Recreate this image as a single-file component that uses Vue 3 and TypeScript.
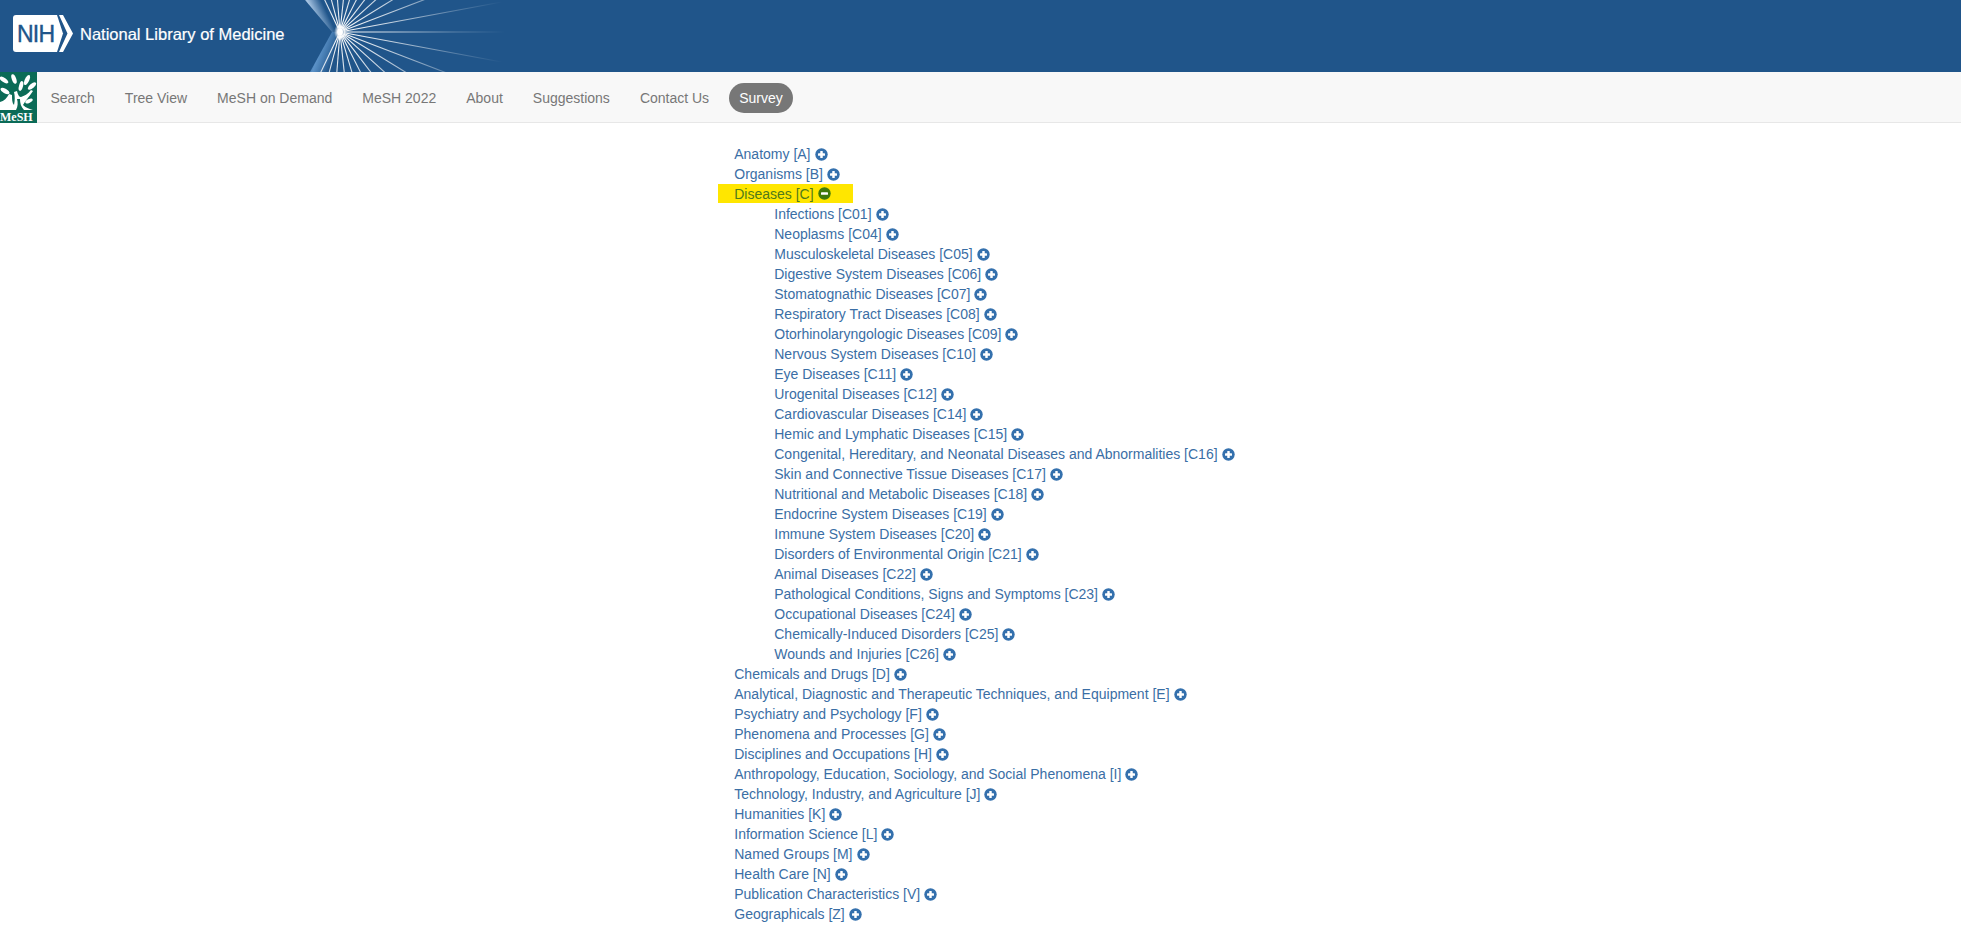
<template>
  <div class="page">
    <header class="banner">
      <svg class="burst" width="230" height="72" viewBox="300 0 230 72">
        <defs>
          <radialGradient id="rayGrad" gradientUnits="userSpaceOnUse" cx="340" cy="32" r="165">
            <stop offset="0" stop-color="#ffffff" />
            <stop offset="0.3" stop-color="#ffffff" stop-opacity="0.75" />
            <stop offset="0.7" stop-color="#ffffff" stop-opacity="0.25" />
            <stop offset="1" stop-color="#ffffff" stop-opacity="0" />
          </radialGradient>
          <radialGradient id="coreGrad">
            <stop offset="0.4" stop-color="#ffffff" />
            <stop offset="1" stop-color="#ffffff" stop-opacity="0" />
          </radialGradient>
          <linearGradient id="bandTop" gradientUnits="userSpaceOnUse" x1="305" y1="10" x2="322" y2="2">
            <stop offset="0" stop-color="#a9c6e4" stop-opacity="0.15" />
            <stop offset="0.3" stop-color="#a9c6e4" />
            <stop offset="1" stop-color="#20558a" />
          </linearGradient>
          <linearGradient id="bandBottom" gradientUnits="userSpaceOnUse" x1="308" y1="60" x2="330" y2="68">
            <stop offset="0" stop-color="#5b92c8" stop-opacity="0.2" />
            <stop offset="0.35" stop-color="#5b92c8" />
            <stop offset="1" stop-color="#20558a" />
          </linearGradient>
        </defs>
        <polygon points="305,0 322,0 337,32 332,32" fill="url(#bandTop)" />
        <polygon points="332,32 337,32 329,72 310,72" fill="url(#bandBottom)" />
        <line
          v-for="ray in rays"
          :key="ray.angle"
          :x1="ray.x1"
          :y1="ray.y1"
          :x2="ray.x2"
          :y2="ray.y2"
          stroke="url(#rayGrad)"
          :stroke-width="ray.width"
        />
        <ellipse cx="340" cy="32" rx="6" ry="8.5" fill="url(#coreGrad)" />
      </svg>
      <div class="nih">
        <svg width="60" height="37" viewBox="0 0 60 37">
          <path d="M3 0H44L50 18.500L44 37H3Q0 37 0 34V3Q0 0 3 0Z" fill="#fff" />
          <path d="M46 0H50L60 18.500L50 37H46L54.500 18.500Z" fill="#fff" />
        </svg>
        <span class="nih-mark">NIH</span>
      </div>
      <span class="nlm">National Library of Medicine</span>
    </header>

    <nav class="navbar">
      <svg class="mesh-logo" width="37" height="51" viewBox="0 0 37 51">
        <rect width="37" height="51" fill="#0b6b57" />
        <path d="M0 38V30C4 29 7 26 9 22L12 23C12 27 12 31 14 33C15 28 15 24 14 20L17 19C18 23 19 25 21 25C24 24 28 22 31 18L33 19C29 25 25 29 23 33C26 36 30 37 33 38Z" fill="#fff" />
        <path d="M16 38C18 34 18 31 17 27L20 27C20 31 21 35 24 38Z" fill="#0b6b57" />
        <g fill="#fff">
          <ellipse cx="4" cy="8" rx="5" ry="2.200" transform="rotate(35 4 8)" />
          <ellipse cx="14" cy="7" rx="2.200" ry="5" transform="rotate(-20 14 7)" />
          <ellipse cx="27" cy="8" rx="2.200" ry="5.500" transform="rotate(25 27 8)" />
          <ellipse cx="32" cy="14" rx="5" ry="2.200" transform="rotate(-40 32 14)" />
          <ellipse cx="5" cy="19" rx="5" ry="2.200" transform="rotate(30 5 19)" />
          <ellipse cx="21" cy="14" rx="2" ry="5" transform="rotate(15 21 14)" />
          <ellipse cx="29" cy="29" rx="4" ry="1.800" transform="rotate(-25 29 29)" />
        </g>
        <text x="0" y="49" class="mesh-word">MeSH</text>
      </svg>
      <ul class="nav-links">
        <li v-for="link in links" :key="link" class="nav-link">{{ link }}</li>
        <li class="nav-link survey">Survey</li>
      </ul>
    </nav>

    <main class="tree">
      <ul class="tree-list">
        <li v-for="cat in categories" :key="cat.label">
          <div class="row" :class="{ open: cat.children }">
            <a class="term">{{ cat.label }}</a>
            <svg class="toggle" width="13" height="13" viewBox="0 0 13 13">
              <circle cx="6.500" cy="6.500" r="6.200" fill="currentColor" />
              <rect x="3" y="5.250" width="7" height="2.500" rx="0.600" fill="#fff" />
              <rect v-if="!cat.children" x="5.250" y="3" width="2.500" height="7" rx="0.600" fill="#fff" />
            </svg>
          </div>
          <ul v-if="cat.children" class="tree-sub">
            <li v-for="child in cat.children" :key="child" class="row">
              <a class="term">{{ child }}</a>
              <svg class="toggle" width="13" height="13" viewBox="0 0 13 13">
                <circle cx="6.500" cy="6.500" r="6.200" fill="currentColor" />
                <rect x="3" y="5.250" width="7" height="2.500" rx="0.600" fill="#fff" />
                <rect x="5.250" y="3" width="2.500" height="7" rx="0.600" fill="#fff" />
              </svg>
            </li>
          </ul>
        </li>
      </ul>
    </main>
  </div>
</template>

<script setup lang="ts">
interface Category {
  label: string;
  children?: string[];
}

const links = ['Search', 'Tree View', 'MeSH on Demand', 'MeSH 2022', 'About', 'Suggestions', 'Contact Us'];

const categories: Category[] = [
  { label: 'Anatomy [A]' },
  { label: 'Organisms [B]' },
  {
    label: 'Diseases [C]',
    children: [
      'Infections [C01]',
      'Neoplasms [C04]',
      'Musculoskeletal Diseases [C05]',
      'Digestive System Diseases [C06]',
      'Stomatognathic Diseases [C07]',
      'Respiratory Tract Diseases [C08]',
      'Otorhinolaryngologic Diseases [C09]',
      'Nervous System Diseases [C10]',
      'Eye Diseases [C11]',
      'Urogenital Diseases [C12]',
      'Cardiovascular Diseases [C14]',
      'Hemic and Lymphatic Diseases [C15]',
      'Congenital, Hereditary, and Neonatal Diseases and Abnormalities [C16]',
      'Skin and Connective Tissue Diseases [C17]',
      'Nutritional and Metabolic Diseases [C18]',
      'Endocrine System Diseases [C19]',
      'Immune System Diseases [C20]',
      'Disorders of Environmental Origin [C21]',
      'Animal Diseases [C22]',
      'Pathological Conditions, Signs and Symptoms [C23]',
      'Occupational Diseases [C24]',
      'Chemically-Induced Disorders [C25]',
      'Wounds and Injuries [C26]',
    ],
  },
  { label: 'Chemicals and Drugs [D]' },
  { label: 'Analytical, Diagnostic and Therapeutic Techniques, and Equipment [E]' },
  { label: 'Psychiatry and Psychology [F]' },
  { label: 'Phenomena and Processes [G]' },
  { label: 'Disciplines and Occupations [H]' },
  { label: 'Anthropology, Education, Sociology, and Social Phenomena [I]' },
  { label: 'Technology, Industry, and Agriculture [J]' },
  { label: 'Humanities [K]' },
  { label: 'Information Science [L]' },
  { label: 'Named Groups [M]' },
  { label: 'Health Care [N]' },
  { label: 'Publication Characteristics [V]' },
  { label: 'Geographicals [Z]' },
];

// rays of the burst, about every 10.5 degrees from the centre of the chevron
const rays = Array.from({ length: 23 }, (_, i) => {
  const angle = (i - 11) * 10.5;
  const rad = (angle * Math.PI) / 180;
  return {
    angle,
    x1: 340 + Math.cos(rad) * 4,
    y1: 32 + Math.sin(rad) * 4,
    x2: 340 + Math.cos(rad) * 170,
    y2: 32 + Math.sin(rad) * 170,
    width: 1.1,
  };
});
</script>

<style scoped>
.page {
  font-family: "Liberation Sans", Arial, sans-serif;
  font-size: 14px;
  line-height: 20px;
  color: #333;
}

.banner {
  position: relative;
  height: 72px;
  background: #20558a;
  display: flex;
  align-items: center;
  padding-left: 13px;
  overflow: hidden;
}

.burst {
  position: absolute;
  left: 300px;
  top: 0;
}

.nih {
  position: relative;
  width: 60px;
  height: 37px;
  margin-top: -6px;
}

.nih-mark {
  position: absolute;
  left: 4px;
  top: 9px;
  font-size: 23px;
  line-height: 20px;
  letter-spacing: -0.8px;
  color: #20558a;
  -webkit-text-stroke: 0.4px #20558a;
}

.nlm {
  position: relative;
  margin-left: 7px;
  margin-top: -4px;
  font-size: 16.5px;
  color: #fff;
  -webkit-text-stroke: 0.2px #fff;
}

.navbar {
  display: flex;
  height: 50px;
  background: #f8f8f8;
  border-bottom: 1px solid #e7e7e7;
}

.mesh-logo {
  flex: none;
}

.mesh-word {
  font-family: "Liberation Serif", serif;
  font-size: 12px;
  font-weight: 700;
  fill: #fff;
}

.nav-links {
  display: flex;
  align-items: center;
  gap: 10px;
  margin: 0;
  padding: 1px 0 0 3.5px;
  list-style: none;
}

.nav-link {
  padding: 5px 10px;
  border-radius: 15px;
  color: #777;
}

.survey {
  background: #777;
  color: #fff;
}

.tree {
  display: flex;
  justify-content: center;
  padding-top: 21px;
}

.tree-list {
  width: 500px;
  margin: 0 0 0 7.500px;
  padding: 0;
  list-style: none;
}

.tree-sub {
  margin: 0;
  padding: 0 0 0 40px;
  list-style: none;
}

.row {
  display: flex;
  align-items: center;
  gap: 4px;
  height: 20px;
  white-space: nowrap;
}

.term {
  color: #3a6ea5;
}

.toggle {
  flex: none;
  color: #3470ad;
}

.row.open {
  width: 135px;
  height: 19px;
  margin-bottom: 1px;
  margin-left: -16px;
  padding-left: 16px;
  box-sizing: border-box;
  background: #ffe600;
}

.row.open .term {
  color: #4f7a1c;
}

.row.open .toggle {
  color: #3f7a0a;
}
</style>
